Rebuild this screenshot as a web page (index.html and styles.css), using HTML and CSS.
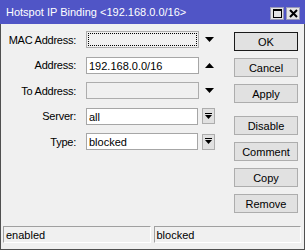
FILE: index.html
```html
<!DOCTYPE html>
<html lang="en">
<head>
    <meta charset="UTF-8">
    <meta name="viewport" content="width=device-width, initial-scale=1.0">
    <title>Hotspot IP Binding</title>
    <link rel="stylesheet" href="styles.css">
</head>
<body>
    <div class="window">
        <div class="titlebar">
            <span class="title">Hotspot IP Binding &lt;192.168.0.0/16&gt;</span>
            <div class="title-btns">
                <span class="tbtn">
                    <svg width="9" height="9" viewBox="0 0 9 9"><rect x="0.5" y="0.5" width="8" height="8" fill="none" stroke="#000"/><rect x="0" y="0" width="9" height="2" fill="#000"/></svg>
                </span>
                <span class="tbtn">
                    <svg width="9" height="9" viewBox="0 0 9 9"><path d="M1 1 L8 8 M8 1 L1 8" stroke="#000" stroke-width="2"/></svg>
                </span>
            </div>
        </div>

        <div class="content">
            <div class="form">
                <div class="row">
                    <label>MAC Address:</label>
                    <div class="field disabled focused"><span class="focus-ring"></span></div>
                    <span class="arrow">
                        <svg width="9" height="5" viewBox="0 0 9 5"><path d="M0 0 L9 0 L4.5 5 Z" fill="#000"/></svg>
                    </span>
                </div>
                <div class="row">
                    <label>Address:</label>
                    <div class="field">192.168.0.0/16</div>
                    <span class="arrow">
                        <svg width="9" height="5" viewBox="0 0 9 5"><path d="M0 5 L9 5 L4.5 0 Z" fill="#000"/></svg>
                    </span>
                </div>
                <div class="row">
                    <label>To Address:</label>
                    <div class="field disabled"></div>
                    <span class="arrow">
                        <svg width="9" height="5" viewBox="0 0 9 5"><path d="M0 0 L9 0 L4.5 5 Z" fill="#000"/></svg>
                    </span>
                </div>
                <div class="row">
                    <label>Server:</label>
                    <div class="field short">all</div>
                    <span class="drop">
                        <svg width="7" height="7" viewBox="0 0 7 7"><rect x="0" y="0" width="7" height="1" fill="#000"/><path d="M0 2 L7 2 L3.5 6 Z" fill="#000"/></svg>
                    </span>
                </div>
                <div class="row">
                    <label>Type:</label>
                    <div class="field short">blocked</div>
                    <span class="drop">
                        <svg width="7" height="7" viewBox="0 0 7 7"><rect x="0" y="0" width="7" height="1" fill="#000"/><path d="M0 2 L7 2 L3.5 6 Z" fill="#000"/></svg>
                    </span>
                </div>
            </div>

            <div class="buttons">
                <button class="default">OK</button>
                <button>Cancel</button>
                <button>Apply</button>
                <button class="spaced">Disable</button>
                <button>Comment</button>
                <button>Copy</button>
                <button>Remove</button>
            </div>
        </div>

        <div class="statusbar">
            <div class="panel">enabled</div>
            <div class="panel">blocked</div>
        </div>
    </div>
</body>
</html>
```

FILE: styles.css
```css
* {
  box-sizing: border-box;
}

body {
  margin: 0;
  font-family: "Liberation Sans", Arial, sans-serif;
  font-size: 11px;
  color: #000;
}

.window {
  width: 305px;
  height: 250px;
  display: flex;
  flex-direction: column;
  background-color: #f0f0f0;
  border: 1px solid #505050;
  border-top: none;
}

/* Title bar */
.titlebar {
  height: 24px;
  margin: 0 -1px;
  display: flex;
  align-items: center;
  padding-left: 6px;
  padding-right: 5px;
  background-color: #5055c6;
  color: #fff;
  font-size: 11px;
}

.title-btns {
  margin-left: auto;
  display: flex;
  gap: 2px;
  margin-top: 2px;
}

.tbtn {
  width: 14px;
  height: 13px;
  display: flex;
  align-items: center;
  justify-content: center;
  background-color: #e4e4e4;
  border: 1px solid #9a9ab8;
}

/* Content */
.content {
  display: flex;
  flex: 1;
  padding-top: 6px;
}

.form {
  display: flex;
  flex-direction: column;
  gap: 8.5px;
  padding-top: 1px;
}

.row {
  display: flex;
  align-items: center;
  height: 17px;
}

.row label {
  width: 75px;
  text-align: right;
  margin-right: 10px;
  letter-spacing: -0.25px;
}

.field {
  width: 113px;
  height: 17px;
  position: relative;
  padding: 1px 2px;
  line-height: 14px;
  background-color: #fff;
  border: 1px solid #a6a6a6;
}

.field.short {
  width: 112px;
}

.field.disabled {
  background-color: #f0f0f0;
  border-color: #adadad;
}

.focus-ring {
  position: absolute;
  top: 1px;
  left: 1px;
  right: 1px;
  bottom: 1px;
  border: 1px dotted #000;
}

.arrow {
  display: flex;
  margin-left: 6px;
}

.drop {
  width: 13px;
  height: 16px;
  margin-left: 4px;
  display: flex;
  align-items: center;
  justify-content: center;
  background-color: #e1e1e1;
  border: 1px solid #adadad;
}

/* Buttons */
.buttons {
  margin-left: auto;
  margin-right: 6px;
  display: flex;
  flex-direction: column;
  gap: 7px;
  padding-top: 2px;
}

.buttons button {
  width: 64px;
  height: 19px;
  padding: 0;
  font-family: inherit;
  font-size: 11px;
  color: #000;
  background-color: #e1e1e1;
  border: 1px solid #adadad;
}

.buttons button.default {
  border-color: #1a1a1a;
}

.buttons button.spaced {
  margin-top: 6px;
}

/* Status bar */
.statusbar {
  display: flex;
  gap: 3px;
  padding: 0 3px 6px 2px;
}

.panel {
  flex: 1;
  height: 17px;
  padding: 0 2px;
  line-height: 16px;
  border: 1px solid #a0a0a0;
  border-right-color: #fff;
  border-bottom-color: #fff;
}
```
